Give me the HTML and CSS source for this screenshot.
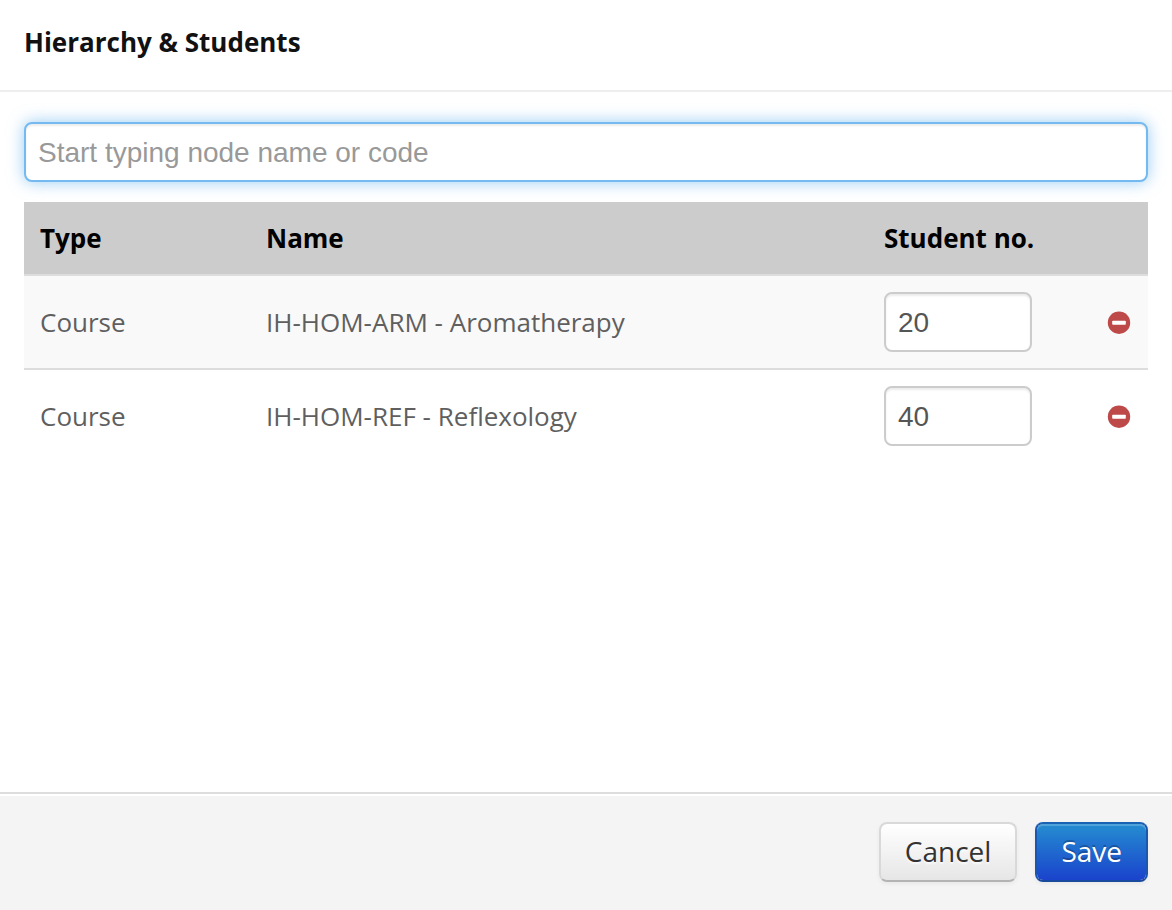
FILE: index.html
```html
<!DOCTYPE html>
<html lang="en">
<head>
    <meta charset="UTF-8">
    <meta name="viewport" content="width=device-width, initial-scale=1.0">
    <title>Hierarchy &amp; Students</title>
    <link rel="stylesheet" href="styles.css">
</head>
<body>

    <form class="modal" id="studentsForm">
        <header class="modal-header">
            <h1>Hierarchy &amp; Students</h1>
        </header>

        <main class="modal-body">
            <input class="field search" type="text" placeholder="Start typing node name or code" aria-label="Node name or code">

            <table>
                <thead>
                    <tr>
                        <th class="col-type">Type</th>
                        <th>Name</th>
                        <th class="col-number" id="studentNo">Student no.</th>
                        <td class="col-action"></td>
                    </tr>
                </thead>
                <tbody>
                    <tr>
                        <td>Course</td>
                        <td>IH-HOM-ARM - Aromatherapy</td>
                        <td><input class="field number" type="text" value="20" aria-labelledby="studentNo"></td>
                        <td>
                            <button class="remove-btn" type="button" aria-label="Remove Aromatherapy">
                                <svg viewBox="0 0 24 24"><circle cx="11" cy="12.7" r="11.2" fill="#bd4a48"/><rect x="4.2" y="10.8" width="13.6" height="4" rx="0.8" fill="#fff"/></svg>
                            </button>
                        </td>
                    </tr>
                    <tr>
                        <td>Course</td>
                        <td>IH-HOM-REF - Reflexology</td>
                        <td><input class="field number" type="text" value="40" aria-labelledby="studentNo"></td>
                        <td>
                            <button class="remove-btn" type="button" aria-label="Remove Reflexology">
                                <svg viewBox="0 0 24 24"><circle cx="11" cy="12.7" r="11.2" fill="#bd4a48"/><rect x="4.2" y="10.8" width="13.6" height="4" rx="0.8" fill="#fff"/></svg>
                            </button>
                        </td>
                    </tr>
                </tbody>
            </table>
        </main>

        <footer class="modal-footer">
            <button class="btn" type="button">Cancel</button>
            <button class="btn btn-primary" type="submit">Save</button>
        </footer>
    </form>

</body>
</html>
```
FILE: styles.css
```css
* {
    box-sizing: border-box;
}
body {
    margin: 0;
    background: #fff;
    color: #5f5f5f;
    font-family: "Open Sans", sans-serif;
    font-size: 26px;
    line-height: 40px;
}
.modal {
    display: flex;
    flex-direction: column;
    min-height: 100vh;
}
.modal-header {
    padding: 22px 24px 28px;
    border-bottom: 2px solid #eee;
}
h1 {
    margin: 0;
    color: #111;
    font-size: 26px;
    line-height: 40px;
}
.modal-body {
    flex: 1;
    padding: 30px 24px;
}
.field {
    display: block;
    width: 100%;
    height: 60px;
    padding: 2px 12px 0;
    border: 2px solid #ccc;
    border-radius: 8px;
    background: #fff;
    box-shadow: inset 0 2px 2px rgba(0,0,0,0.075);
    color: #555;
    font-family: "Liberation Sans", Arial, sans-serif;
    font-size: 28px;
}
.search {
    margin-bottom: 20px;
    border-color: #74b9ef;
    box-shadow: inset 0 2px 2px rgba(0,0,0,0.075), 0 0 16px rgba(82,168,236,0.6);
}
.search::placeholder {
    color: #999;
}
.number {
    width: 148px;
}
table {
    width: 100%;
    border-collapse: separate;
    border-spacing: 0;
    table-layout: fixed;
}
th, td {
    padding: 16px;
    text-align: left;
}
thead th, thead td {
    background: #ccc;
    color: #000;
}
tbody td {
    border-top: 2px solid #ddd;
}
tbody tr:nth-child(odd) td {
    background: #f9f9f9;
}
.col-type {
    width: 226px;
}
.col-number {
    width: 224px;
}
.col-action {
    width: 56px;
}
.remove-btn {
    display: block;
    width: 24px;
    height: 24px;
    padding: 0;
    border: none;
    background: none;
    cursor: pointer;
}
.remove-btn svg {
    display: block;
    overflow: visible;
}
.modal-footer {
    display: flex;
    justify-content: flex-end;
    gap: 18px;
    padding: 28px 24px;
    border-top: 2px solid #ddd;
    background: #f4f4f4;
    box-shadow: inset 0 2px 0 #fff;
}
.btn {
    height: 60px;
    padding: 0 24px 2px;
    border: 2px solid #d9d9d9;
    border-bottom-color: #b3b3b3;
    border-radius: 8px;
    background: linear-gradient(#fff, #e6e6e6) padding-box;
    box-shadow: inset 0 2px 0 rgba(255,255,255,0.2), 0 2px 4px rgba(0,0,0,0.05);
    color: #333;
    font-family: "Open Sans", sans-serif;
    font-size: 28px;
    line-height: 40px;
    text-shadow: 0 2px 2px rgba(255,255,255,0.75);
    cursor: pointer;
}
.btn-primary {
    border-color: #1a62b4 #1b57ae #174a9c;
    background: linear-gradient(#258dd1, #1a43cc) padding-box;
    color: #fff;
    text-shadow: 0 -2px 0 rgba(0,0,0,0.25);
}
```
